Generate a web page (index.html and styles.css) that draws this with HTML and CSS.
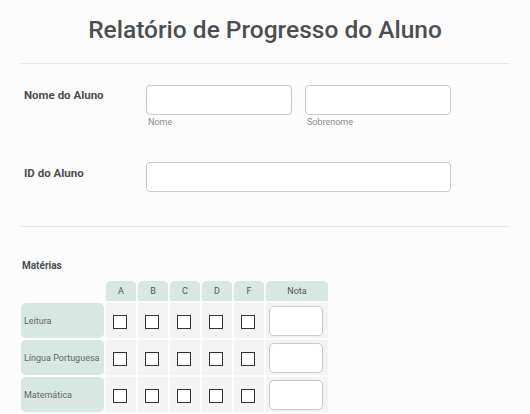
FILE: index.html
```html
<!DOCTYPE html>
<html lang="pt">
<head>
<meta charset="utf-8">
<link rel="stylesheet" href="styles.css">
</head>
<body>
<div class="page">
  <h1 class="title">Relatório de Progresso do Aluno</h1>
  <hr class="rule">
  <div class="field">
    <div class="field-label">Nome do Aluno</div>
    <div class="field-inputs">
      <div class="sub">
        <input class="text" type="text">
        <span class="hint">Nome</span>
      </div>
      <div class="sub">
        <input class="text" type="text">
        <span class="hint">Sobrenome</span>
      </div>
    </div>
  </div>
  <div class="field field-id">
    <div class="field-label">ID do Aluno</div>
    <div class="field-inputs">
      <input class="text wide" type="text">
    </div>
  </div>
  <hr class="rule rule2">
  <div class="section-label">Matérias</div>
  <table class="grid">
    <thead>
      <tr>
        <th class="blank"></th>
        <th>A</th><th>B</th><th>C</th><th>D</th><th>F</th><th class="nota">Nota</th>
      </tr>
    </thead>
    <tbody>
      <tr>
        <td class="subj">Leitura</td>
        <td><input class="box" type="checkbox"></td>
        <td><input class="box" type="checkbox"></td>
        <td><input class="box" type="checkbox"></td>
        <td><input class="box" type="checkbox"></td>
        <td><input class="box" type="checkbox"></td>
        <td><input class="grade" type="text"></td>
      </tr>
      <tr>
        <td class="subj">Língua Portuguesa</td>
        <td><input class="box" type="checkbox"></td>
        <td><input class="box" type="checkbox"></td>
        <td><input class="box" type="checkbox"></td>
        <td><input class="box" type="checkbox"></td>
        <td><input class="box" type="checkbox"></td>
        <td><input class="grade" type="text"></td>
      </tr>
      <tr>
        <td class="subj">Matemática</td>
        <td><input class="box" type="checkbox"></td>
        <td><input class="box" type="checkbox"></td>
        <td><input class="box" type="checkbox"></td>
        <td><input class="box" type="checkbox"></td>
        <td><input class="box" type="checkbox"></td>
        <td><input class="grade" type="text"></td>
      </tr>
    </tbody>
  </table>
</div>
</body>
</html>
```

FILE: styles.css
```css
html, body {
  margin: 0;
  padding: 0;
  background: #fcfcfc;
  font-family: Roboto, "Liberation Sans", sans-serif;
  color: #555;
}
.page {
  padding: 0 21px;
}
.title {
  margin: 0;
  padding-top: 15px;
  height: 47px;
  box-sizing: border-box;
  text-align: center;
  font-size: 24.5px;
  font-weight: 500;
  color: #4b4f52;
  line-height: 30px;
}
.rule {
  margin: 16px 0 0;
  border: 0;
  border-top: 1px solid #e6e6e6;
  height: 0;
}
.field {
  display: flex;
  margin-top: 21px;
}
.field-label {
  width: 122px;
  padding-left: 3px;
  padding-top: 3px;
  font-size: 11.5px;
  font-weight: 700;
  color: #4a4d50;
  line-height: 14px;
}
.field-inputs {
  display: flex;
  gap: 13px;
}
.sub {
  display: flex;
  flex-direction: column;
}
.text {
  width: 146px;
  height: 30px;
  box-sizing: border-box;
  border: 1px solid #c9c9c9;
  border-radius: 4px;
  background: #fff;
  margin: 0;
}
.wide {
  width: 305px;
}
.hint {
  font-size: 9px;
  color: #8a8a8a;
  margin-top: 1px;
  padding-left: 2px;
  line-height: 12px;
}
.field-id {
  margin-top: 34px;
}
.field-id .field-label {
  padding-top: 4px;
}
.rule2 {
  margin-top: 34px;
}
.section-label {
  margin-top: 33px;
  font-size: 10px;
  font-weight: 700;
  color: #4a4d50;
  padding-left: 1px;
  line-height: 12px;
}
.grid {
  margin-top: 7px;
  border-collapse: separate;
  border-spacing: 2px;
  margin-left: -2px;
  table-layout: fixed;
}
.grid th {
  background: #d7e7e1;
  width: 30px;
  height: 20px;
  padding: 0;
  font-size: 9px;
  font-weight: 400;
  color: #555;
  border-radius: 5px 5px 0 0;
}
.grid th.blank {
  background: transparent;
  width: 83px;
}
.grid th.nota {
  width: 62px;
}
.grid td {
  background: #f3f3f3;
  height: 35px;
  padding: 0 3px 0 0;
  text-align: center;
}
.grid td.subj {
  background: #d7e7e1;
  text-align: left;
  padding-left: 3px;
  padding-right: 0;
  font-size: 9px;
  color: #666;
  border-radius: 5px;
}
.box {
  appearance: none;
  -webkit-appearance: none;
  width: 14px;
  height: 14px;
  margin: 0;
  border: 1px solid #333;
  background: #fff;
  vertical-align: middle;
}
.grade {
  width: 54px;
  height: 30px;
  box-sizing: border-box;
  margin: 0;
  border: 1px solid #c9c9c9;
  border-radius: 5px;
  background: #fff;
  vertical-align: middle;
}
```
